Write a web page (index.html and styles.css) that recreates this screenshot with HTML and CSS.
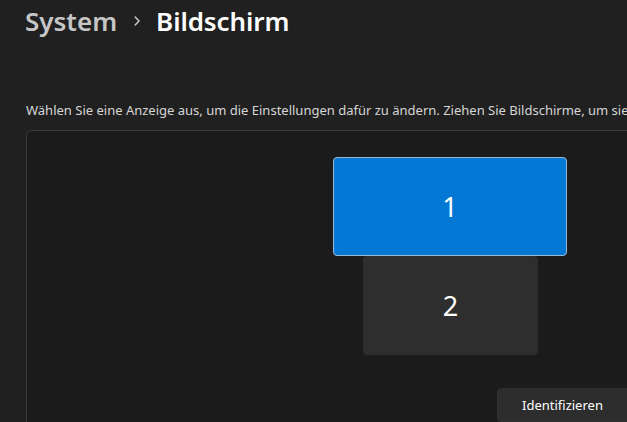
FILE: index.html
```html
<!DOCTYPE html>
<html lang="de">
<head>
<meta charset="utf-8">
<link rel="stylesheet" href="styles.css">
</head>
<body>
<div class="page">
  <h1 class="crumbs">
    <span class="parent">System</span>
    <span class="sep">
      <svg width="12" height="12" viewBox="0 0 12 12"><path d="M4.2 2 L8 6 L4.2 10" fill="none" stroke="#c8c8c8" stroke-width="1.5" stroke-linecap="round" stroke-linejoin="round"/></svg>
    </span>
    <span class="current">Bildschirm</span>
  </h1>
  <p class="desc">Wählen Sie eine Anzeige aus, um die Einstellungen dafür zu ändern. Ziehen Sie Bildschirme, um sie neu anzuordnen.</p>
  <div class="arrange">
    <div class="monitor m1 selected"><span>1</span></div>
    <div class="monitor m2"><span>2</span></div>
    <button class="identify">Identifizieren</button>
  </div>
</div>
</body>
</html>
```
FILE: styles.css
```css
html, body {
  margin: 0;
  padding: 0;
  background: #202020;
  overflow: hidden;
  width: 627px;
  height: 422px;
}
.page {
  padding: 0 0 0 26px;
  font-family: "Noto Sans", "Open Sans", sans-serif;
  color: #ffffff;
  width: 601px;
  height: 422px;
  overflow: hidden;
}
.crumbs {
  margin: 0;
  height: 44px;
  display: flex;
  align-items: center;
  font-size: 26px;
  font-weight: 600;
  margin-left: -1px;
  padding-bottom: 2px;
  box-sizing: border-box;
}
.parent { color: #c6c6c6; }
.sep { display: flex; width: 39px; justify-content: center; padding-bottom: 1px; }
.current { color: #ffffff; letter-spacing: -0.1px; }
.desc {
  margin: 58px 0 0 0;
  font-size: 13px;
  line-height: 16px;
  color: #d6d6d6;
  white-space: nowrap;
}
.arrange {
  position: relative;
  margin-top: 12px;
  width: 720px;
  height: 320px;
  background: #1b1b1b;
  border: 1px solid #3a3a3a;
  border-radius: 5px;
  box-sizing: border-box;
}
.monitor {
  position: absolute;
  display: flex;
  align-items: center;
  justify-content: center;
  border-radius: 4px;
  font-size: 27px;
  font-weight: 400;
  color: #ffffff;
  box-sizing: border-box;
}
.m1 {
  left: 306px;
  top: 26px;
  width: 234px;
  height: 99px;
  background: #0078d4;
  border: 1px solid #9ab8d4;
}
.m2 {
  left: 336px;
  top: 125px;
  width: 175px;
  height: 99px;
  background: #2e2e2e;
}
.identify {
  position: absolute;
  left: 470px;
  top: 257px;
  width: 140px;
  height: 34px;
  background: #2d2d2d;
  border: 1px solid #303030;
  border-radius: 4px;
  color: #ffffff;
  font-family: "Noto Sans", "Open Sans", sans-serif;
  font-size: 13px;
  text-align: left;
  padding: 0 0 0 24px;
  box-sizing: border-box;
}
```
